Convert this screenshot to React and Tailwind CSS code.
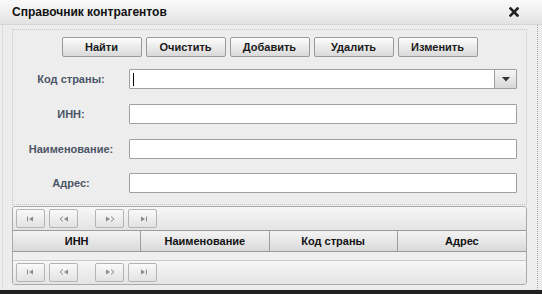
import React from "react";

const font = { fontFamily: '"Liberation Sans", Arial, sans-serif' };

function PagerIcon({ kind }) {
  // tiny grey glyphs used by the grid pager
  const c = "#8a8a8a";
  return (
    <svg width="10" height="6" viewBox="0 0 10 6">
      {kind === "first" && (
        <>
          <rect x="1" y="0.5" width="1" height="5" fill={c} />
          <path d="M3 3 L7 0.5 L7 5.5 Z" fill={c} />
        </>
      )}
      {kind === "prev" && (
        <>
          <path d="M4 0.5 L1 3 L4 5.5" fill="none" stroke={c} strokeWidth="1" />
          <path d="M5 3 L9 0.5 L9 5.5 Z" fill={c} />
        </>
      )}
      {kind === "next" && (
        <>
          <path d="M1 0.5 L5 3 L1 5.5 Z" fill={c} />
          <path d="M6 0.5 L9 3 L6 5.5" fill="none" stroke={c} strokeWidth="1" />
        </>
      )}
      {kind === "last" && (
        <>
          <path d="M3 0.5 L7 3 L3 5.5 Z" fill={c} />
          <rect x="8" y="0.5" width="1" height="5" fill={c} />
        </>
      )}
    </svg>
  );
}

function PagerBtn({ kind }) {
  return (
    <div className="w-[29px] h-[19px] flex items-center justify-center rounded-[2px] border border-[#b4b4b4] bg-gradient-to-b from-[#fafafa] to-[#e2e2e2]">
      <PagerIcon kind={kind} />
    </div>
  );
}

function Pager() {
  return (
    <div className="h-[24px] flex items-center pl-[3px] bg-gradient-to-b from-[#f7f7f7] to-[#e4e4e4]">
      <PagerBtn kind="first" />
      <div className="w-[4px]" />
      <PagerBtn kind="prev" />
      <div className="w-[17px]" />
      <PagerBtn kind="next" />
      <div className="w-[4px]" />
      <PagerBtn kind="last" />
    </div>
  );
}

function ToolButton({ children }) {
  return (
    <button className="w-[80px] h-[20px] rounded-[2px] border border-[#9a9a9a] bg-gradient-to-b from-[#fdfdfd] to-[#d9d9d9] text-[11px] font-bold text-[#1a1a1a] leading-none">
      {children}
    </button>
  );
}

function Row({ label, children, className = "" }) {
  return (
    <div className={"flex items-center h-[20px] " + className}>
      <div className="w-[116px] text-center text-[11px] font-bold text-[#4b5566]">{label}</div>
      <div className="flex-1 pr-[9px] h-full">{children}</div>
    </div>
  );
}

function TextBox() {
  return <div className="h-full bg-white border border-[#a0a0a0] rounded-[1px]" />;
}

export default function App() {
  const columns = ["ИНН", "Наименование", "Код страны", "Адрес"];

  return (
    <div className="w-[542px] h-[294px] bg-[#202020] overflow-hidden" style={font}>
      <div className="h-[290px] bg-[#ededed] flex flex-col w-[542px]">
        <div className="h-[25px] flex items-center justify-between pl-[12px] pr-[23px] bg-gradient-to-b from-[#fafafa] to-[#e3e3e3] border-b border-[#d6d6d6]">
          <span className="text-[12px] font-bold text-[#111]">Справочник контрагентов</span>
          <svg width="10" height="10" viewBox="0 0 10 10">
            <path d="M1.5 1.5 L8.5 8.5 M8.5 1.5 L1.5 8.5" stroke="#222" strokeWidth="2.6" strokeLinecap="square" />
          </svg>
        </div>

        <div className="flex-1 flex flex-col pl-[9px] pr-[10px] pt-[4px] pb-[4px] ml-[2px] mr-[4px] border-x border-dotted border-l-[#cfcfcf] border-r-[#a8a8a8]">
          <div className="h-[176px] border border-dotted border-[#c4c4c4] flex flex-col">
            <div className="flex justify-center gap-[4px] pt-[7px]">
              <ToolButton>Найти</ToolButton>
              <ToolButton>Очистить</ToolButton>
              <ToolButton>Добавить</ToolButton>
              <ToolButton>Удалить</ToolButton>
              <ToolButton>Изменить</ToolButton>
            </div>

            <Row label="Код страны:" className="mt-[12px]">
              <div className="h-full flex bg-white border border-[#a0a0a0] rounded-[1px]">
                <div className="flex-1 flex items-center pl-[3px]">
                  <div className="w-px h-[13px] bg-black" />
                </div>
                <div className="w-[22px] h-full flex items-center justify-center border-l border-[#a0a0a0] bg-gradient-to-b from-[#f6f6f6] to-[#d8d8d8]">
                  <svg width="8" height="5" viewBox="0 0 8 5">
                    <path d="M0 0 H8 L4 4.5 Z" fill="#333" />
                  </svg>
                </div>
              </div>
            </Row>
            <Row label="ИНН:" className="mt-[15px]">
              <TextBox />
            </Row>
            <Row label="Наименование:" className="mt-[15px]">
              <TextBox />
            </Row>
            <Row label="Адрес:" className="mt-[14px]">
              <TextBox />
            </Row>
          </div>

          <div className="mt-[1px] h-[79px] border border-[#aaaaaa] rounded-[3px] overflow-hidden flex flex-col bg-[#f2f2f2]">
            <Pager />
            <div className="h-[22px] grid grid-cols-4 border-y border-[#9c9c9c] bg-gradient-to-b from-[#f4f4f4] to-[#d9d9d9]">
              {columns.map((c, i) => (
                <div
                  key={c}
                  className={
                    "flex items-center justify-center text-[11px] font-bold text-[#111] " +
                    (i < 3 ? "border-r border-[#9c9c9c]" : "")
                  }
                >
                  {c}
                </div>
              ))}
            </div>
            <div className="h-[9px] bg-[#f0f0f0] border-b border-[#c9c9c9]" />
            <Pager />
          </div>
        </div>
      </div>
    </div>
  );
}
